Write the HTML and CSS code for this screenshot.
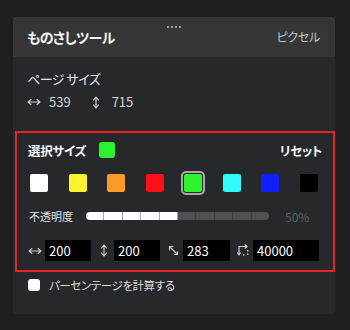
FILE: index.html
```html
<!DOCTYPE html>
<html lang="ja">
<head>
<meta charset="utf-8">
<link rel="stylesheet" href="styles.css">
</head>
<body>
<div class="panel">
  <div class="header">
    <div class="handle"><i></i><i></i><i></i><i></i></div>
    <div class="title">ものさしツール</div>
    <div class="unit">ピクセル</div>
  </div>
  <div class="page">
    <div class="label">ページ サイズ</div>
    <div class="dims">
      <svg class="ico-h" width="14" height="8" viewBox="0 0 14 8"><path d="M1 4H13M1 4L4 1.5M1 4L4 6.5M13 4L10 1.5M13 4L10 6.5" stroke="#cfcfcf" stroke-width="1.1" fill="none" stroke-linecap="round"/></svg>
      <span class="num">539</span>
      <svg class="ico-v" width="8" height="13" viewBox="0 0 8 13"><path d="M4 1V12M4 1L1.5 4M4 1L6.5 4M4 12L1.5 9M4 12L6.5 9" stroke="#cfcfcf" stroke-width="1.1" fill="none" stroke-linecap="round"/></svg>
      <span class="num">715</span>
    </div>
  </div>
  <div class="sel">
    <div class="row1">
      <div class="sel-label">選択サイズ<span class="cur"></span></div>
      <div class="reset">リセット</div>
    </div>
    <div class="swatches">
      <span class="sw" style="background:#ffffff"></span>
      <span class="sw" style="background:#fcf42f"></span>
      <span class="sw" style="background:#fb9a24"></span>
      <span class="sw" style="background:#fd0f17"></span>
      <span class="sw active" style="background:#2bf42f"></span>
      <span class="sw" style="background:#2ffbfb"></span>
      <span class="sw" style="background:#0f1ffb"></span>
      <span class="sw" style="background:#000000"></span>
    </div>
    <div class="opacity">
      <div class="op-label">不透明度</div>
      <div class="track">
        <span class="seg on"></span><span class="seg on"></span><span class="seg on"></span><span class="seg on"></span><span class="seg on"></span>
        <span class="seg"></span><span class="seg"></span><span class="seg"></span><span class="seg"></span><span class="seg"></span>
      </div>
      <div class="pct">50%</div>
    </div>
    <div class="inputs">
      <div class="grp">
        <span class="ico"><svg width="14" height="8" viewBox="0 0 14 8"><path d="M1 4H13M1 4L4 1.5M1 4L4 6.5M13 4L10 1.5M13 4L10 6.5" stroke="#cfcfcf" stroke-width="1.1" fill="none" stroke-linecap="round"/></svg></span>
        <span class="box w46">200</span>
      </div>
      <div class="grp">
        <span class="ico"><svg width="8" height="13" viewBox="0 0 8 13"><path d="M4 1V12M4 1L1.5 4M4 1L6.5 4M4 12L1.5 9M4 12L6.5 9" stroke="#cfcfcf" stroke-width="1.1" fill="none" stroke-linecap="round"/></svg></span>
        <span class="box w46">200</span>
      </div>
      <div class="grp">
        <span class="ico"><svg width="11" height="11" viewBox="0 0 11 11"><path d="M1.5 1.5L9.5 9.5M1.5 1.5V5M1.5 1.5H5M9.5 9.5V6.5M9.5 9.5H6.5" stroke="#cfcfcf" stroke-width="1.1" fill="none" stroke-linecap="round"/></svg></span>
        <span class="box w47">283</span>
      </div>
      <div class="grp">
        <span class="ico"><svg width="13" height="13" viewBox="0 0 13 13"><path d="M2 2.5H10M2 2.5V11M10 2.5L8 0.8M10 2.5L8 4.2M2 11L0.6 9M2 11L3.4 9" stroke="#cfcfcf" stroke-width="1.2" fill="none" stroke-linecap="round"/><rect x="10" y="6" width="1.4" height="1.4" fill="#cfcfcf"/><rect x="10" y="9.5" width="1.4" height="1.4" fill="#cfcfcf"/><rect x="6" y="10.2" width="1.4" height="1.4" fill="#cfcfcf"/></svg></span>
        <span class="box w66">40000</span>
      </div>
    </div>
  </div>
  <div class="check">
    <span class="cb"></span>
    <span class="cb-label">パーセンテージを計算する</span>
  </div>
</div>
</body>
</html>
```

FILE: styles.css
```css
* { box-sizing: border-box; }
html, body { margin: 0; padding: 0; }
body {
  background: #1f1f21;
  width: 350px;
  height: 330px;
  overflow: hidden;
  font-family: "Noto Sans CJK JP", "Noto Sans", sans-serif;
  font-feature-settings: "palt";
  color: #e0e0e0;
}
.panel {
  margin: 17px 15px 0 13px;
  width: 322px;
  background: #27282c;
  border-radius: 2px;
  padding-bottom: 21px;
}
.header {
  position: relative;
  height: 40px;
  background: #363636;
  border-radius: 2px 2px 0 0;
  display: flex;
  align-items: center;
  justify-content: space-between;
  padding: 0 15px 0 14px;
}
.handle {
  position: absolute;
  top: 9px;
  left: 154px;
  display: flex;
  gap: 2px;
}
.handle i {
  width: 2px;
  height: 2px;
  background: #a0a0a0;
}
.title {
  font-size: 14px;
  font-weight: 700;
  letter-spacing: -0.7px;
  color: #f2f2f2;
  line-height: 20px;
}
.unit {
  font-size: 12px;
  letter-spacing: -0.3px;
  color: #c4c4c4;
  line-height: 16px;
}
.page {
  padding: 13px 14px 0 14px;
}
.label {
  font-size: 13px;
  letter-spacing: -0.5px;
  line-height: 18px;
  color: #e6e6e6;
}
.dims {
  margin-top: 5px;
  display: flex;
  align-items: center;
  height: 18px;
}
.dims .num {
  font-size: 13px;
  color: #d4d4d4;
  line-height: 18px;
}
.ico-h { margin-right: 8px; }
.dims .num:nth-of-type(1) { margin-right: 21px; }
.ico-v { margin-right: 12px; margin-left: 0; }
.sel {
  margin: 20px 0 0 2px;
  border: 2px solid #e3261f;
  padding: 9px 11px 9px 11px;
}
.row1 {
  display: flex;
  justify-content: space-between;
  align-items: center;
  height: 16px;
}
.sel-label {
  font-size: 12.5px;
  letter-spacing: -0.3px;
  font-weight: 700;
  color: #f4f4f4;
  display: flex;
  align-items: center;
}
.cur {
  width: 16px;
  height: 16px;
  background: #2bf42f;
  border-radius: 3px;
  margin-left: 13px;
}
.reset {
  font-size: 12.5px;
  letter-spacing: -0.4px;
  font-weight: 700;
  color: #f4f4f4;
}
.swatches {
  margin-top: 16px;
  display: flex;
  justify-content: space-between;
  padding: 0 4px 0 2px;
}
.sw {
  width: 18px;
  height: 18px;
  border-radius: 2px;
}
.sw.active {
  outline: 2px solid #a9a9a9;
  outline-offset: 1px;
}
.opacity {
  margin-top: 16px;
  display: flex;
  align-items: center;
  height: 16px;
}
.op-label {
  font-size: 11px;
  color: #e4e4e4;
  width: 58px;
  padding-left: 1px;
}
.track {
  display: flex;
  width: 183px;
  height: 8px;
}
.seg {
  flex: 1;
  background: #515153;
  border-right: 1px solid #404042;
}
.seg.on {
  background: #ffffff;
  border-right-color: #a8a8a8;
}
.seg:first-child { border-radius: 4px 0 0 4px; }
.seg:last-child { border-radius: 0 4px 4px 0; border-right: 0; }
.pct {
  margin-left: 16px;
  font-size: 12px;
  color: #5f5f61;
}
.inputs {
  margin-top: 16px;
  display: flex;
  gap: 6px;
}
.grp {
  display: flex;
  align-items: center;
  gap: 3px;
}
.ico {
  width: 14px;
  display: flex;
  justify-content: center;
  align-items: center;
}
.box {
  height: 21px;
  background: #000;
  color: #fff;
  font-size: 13px;
  line-height: 21px;
  padding-left: 4px;
}
.w46 { width: 46px; }
.w47 { width: 47px; }
.w66 { width: 66px; }
.check {
  margin-top: 5px;
  padding-left: 15px;
  display: flex;
  align-items: center;
  height: 16px;
}
.cb {
  width: 12px;
  height: 12px;
  background: #fff;
  border-radius: 3px;
  margin-right: 9px;
}
.cb-label {
  font-size: 11.5px;
  letter-spacing: -0.4px;
  color: #dedede;
}
```
